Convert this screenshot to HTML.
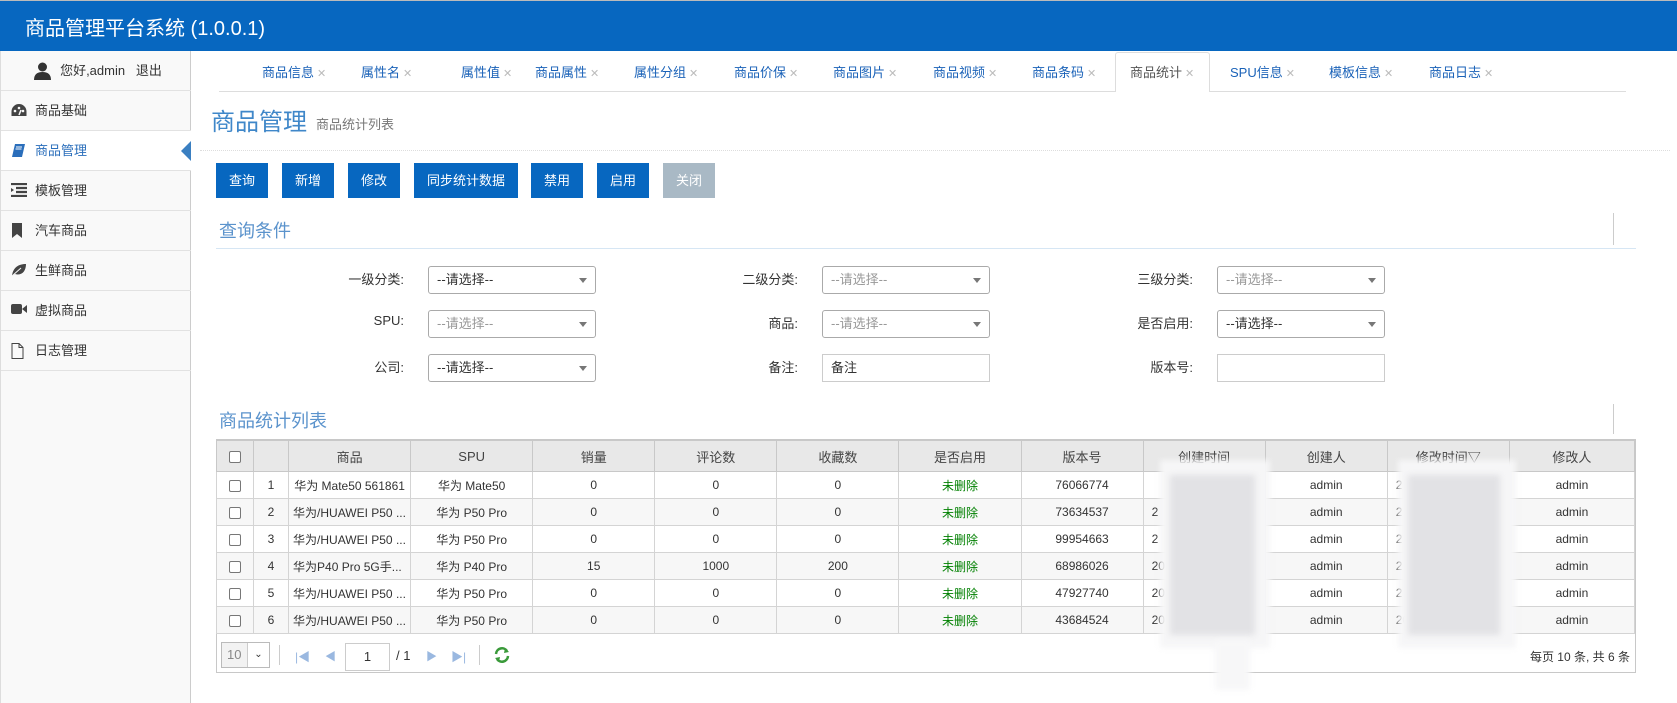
<!DOCTYPE html>
<html><head><meta charset="utf-8">
<style>
*{box-sizing:border-box;margin:0;padding:0}
body{width:1677px;height:703px;overflow:hidden;background:#fff;font-family:"Liberation Sans","Noto Sans CJK SC",sans-serif;font-size:13px;color:#333;position:relative}
.abs{position:absolute}
#hd{left:0;top:0;width:1677px;height:51px;background:#0767c0;border-top:1px solid #bbb}
#hd span{position:absolute;left:25px;top:11px;color:#fff;font-size:20px}
#sb{left:0;top:51px;width:191px;height:652px;background:#f9f9f9;border-right:1px solid #ccc;border-left:1px solid #ddd}
.it{position:absolute;left:0;width:190px;height:40px;border-bottom:1px solid #e2e2e2;line-height:39px;padding-left:34px;font-size:13px;color:#333}
.it svg{position:absolute;left:10px;top:12px}
.tab{position:absolute;top:62px;font-size:13px;color:#1a62b8;white-space:nowrap}
.tab i{font-style:normal;color:#bbb;font-size:11px;margin-left:3px}
.btn{position:absolute;top:163px;height:35px;line-height:35px;background:#0767c0;color:#fff;text-align:center;font-size:13px}
.lbl{position:absolute;text-align:right;width:120px;font-size:13px;color:#333}
.sel{position:absolute;width:168px;height:28px;border:1px solid #aaa;border-radius:3px;font-size:13px;line-height:26px;padding-left:8px;color:#333}
.sel.g{color:#999}
.sel:after{content:"";position:absolute;right:8px;top:11px;border-left:4px solid transparent;border-right:4px solid transparent;border-top:5px solid #777}
.sel.n:after{display:none}
table{position:absolute;left:216px;top:440px;width:1419px;border-collapse:collapse;table-layout:fixed;font-size:12px}
td,th{border:1px solid #d4d4d4;text-align:center;height:27px;white-space:nowrap;overflow:hidden;font-weight:normal}
th{background:#e8e8e8;height:31px;color:#444;font-size:13px;border-color:#c8c8c8}
tr:nth-child(odd) td{background:#f7f7f7}
.cb{display:inline-block;width:12px;height:12px;border:1px solid #777;border-radius:2px;background:#fff;vertical-align:middle}
.gr{color:#008000}
.bl{position:absolute;filter:blur(3px)}
</style></head><body>
<div id="hd" class="abs"><span>商品管理平台系统 (1.0.0.1)</span></div>

<div id="sb" class="abs">
 <div class="it" style="top:0;padding-left:0;text-align:center;line-height:40px">
  <svg style="position:absolute;left:33px;top:11px" width="17" height="18" viewBox="0 0 17 18"><circle cx="8.5" cy="5" r="4.5" fill="#333"/><path d="M0 18 Q0 10 8.5 10 Q17 10 17 18Z" fill="#333"/></svg>
  <span style="margin-left:30px">您好,admin&nbsp;&nbsp; 退出</span></div>
 <div class="it" style="top:40px"><svg width="16" height="14" viewBox="0 0 16 14"><path d="M8 1A7.5 7.5 0 0 0 .5 8.5V13h15V8.5A7.5 7.5 0 0 0 8 1z" fill="#444"/><circle cx="4" cy="8" r="1.3" fill="#f9f9f9"/><circle cx="8" cy="5" r="1.3" fill="#f9f9f9"/><circle cx="12" cy="8" r="1.3" fill="#f9f9f9"/><path d="M8 12L10 7" stroke="#f9f9f9" stroke-width="1.5"/></svg>商品基础</div>
 <div class="it" style="top:80px;background:#fff;color:#2a6ebb"><svg width="15" height="15" viewBox="0 0 15 15"><path d="M4 1h10l-3 13H1z" fill="#2a6ebb"/><path d="M5 4h6M4.5 6h6" stroke="#fff"/></svg>商品管理
  <div style="position:absolute;right:0;top:10px;border-top:10px solid transparent;border-bottom:10px solid transparent;border-right:10px solid #3a7fc1"></div></div>
 <div class="it" style="top:120px"><svg width="16" height="14" viewBox="0 0 16 14"><path d="M0 1h16M5 5h11M5 9h11M0 13h16" stroke="#444" stroke-width="2.2"/><path d="M0 5l3 2-3 2z" fill="#444"/></svg>模板管理</div>
 <div class="it" style="top:160px"><svg width="12" height="15" viewBox="0 0 12 15"><path d="M1 0h10v15l-5-4-5 4z" fill="#444"/></svg>汽车商品</div>
 <div class="it" style="top:200px"><svg width="16" height="14" viewBox="0 0 16 14"><path d="M1 13C2 4 8 1 15 1c0 7-4 12-11 10" fill="#444"/><path d="M1 13L10 5" stroke="#f9f9f9"/></svg>生鲜商品</div>
 <div class="it" style="top:240px"><svg width="16" height="12" viewBox="0 0 16 12"><rect x="0" y="1" width="11" height="10" rx="2" fill="#444"/><path d="M11 6l5-4v8z" fill="#444"/></svg>虚拟商品</div>
 <div class="it" style="top:280px"><svg width="13" height="16" viewBox="0 0 13 16"><path d="M1 .5h7l4 4v11H1z M8 .5v4h4" fill="none" stroke="#444"/></svg>日志管理</div>
</div>

<div class="abs" style="left:219px;top:91px;width:1407px;height:1px;background:#ddd"></div>
<div class="abs" style="left:1115px;top:52px;width:95px;height:40px;background:#fff;border:1px solid #ddd;border-bottom:none;border-radius:3px 3px 0 0"></div>
<div class="tab" style="left:262px">商品信息<i>✕</i></div>
<div class="tab" style="left:361px">属性名<i>✕</i></div>
<div class="tab" style="left:461px">属性值<i>✕</i></div>
<div class="tab" style="left:535px">商品属性<i>✕</i></div>
<div class="tab" style="left:634px">属性分组<i>✕</i></div>
<div class="tab" style="left:734px">商品价保<i>✕</i></div>
<div class="tab" style="left:833px">商品图片<i>✕</i></div>
<div class="tab" style="left:933px">商品视频<i>✕</i></div>
<div class="tab" style="left:1032px">商品条码<i>✕</i></div>
<div class="tab" style="left:1130px;color:#555">商品统计<i>✕</i></div>
<div class="tab" style="left:1230px">SPU信息<i>✕</i></div>
<div class="tab" style="left:1329px">模板信息<i>✕</i></div>
<div class="tab" style="left:1429px">商品日志<i>✕</i></div>

<div class="abs" style="left:211px;top:102px;font-size:24px;color:#3f87c9">商品管理</div>
<div class="abs" style="left:316px;top:114px;font-size:13px;color:#777">商品统计列表</div>
<div class="abs" style="left:200px;top:150px;width:1470px;border-top:1px dotted #ddd"></div>

<div class="btn" style="left:216px;width:52px">查询</div>
<div class="btn" style="left:282px;width:52px">新增</div>
<div class="btn" style="left:348px;width:52px">修改</div>
<div class="btn" style="left:414px;width:104px">同步统计数据</div>
<div class="btn" style="left:531px;width:52px">禁用</div>
<div class="btn" style="left:597px;width:52px">启用</div>
<div class="btn" style="left:663px;width:52px;background:#a9b9c5">关闭</div>

<div class="abs" style="left:219px;top:217px;font-size:18px;color:#5b93cc">查询条件</div>
<div class="abs" style="left:216px;top:248px;width:1420px;height:1px;background:#d6e6f4"></div>
<div class="abs" style="left:1613px;top:213px;width:1px;height:32px;background:#ccc"></div>

<div class="lbl" style="left:284px;top:269px">一级分类:</div>
<div class="sel" style="left:428px;top:266px">--请选择--</div>
<div class="lbl" style="left:678px;top:269px">二级分类:</div>
<div class="sel g" style="left:822px;top:266px">--请选择--</div>
<div class="lbl" style="left:1073px;top:269px">三级分类:</div>
<div class="sel g" style="left:1217px;top:266px">--请选择--</div>

<div class="lbl" style="left:284px;top:313px">SPU:</div>
<div class="sel g" style="left:428px;top:310px">--请选择--</div>
<div class="lbl" style="left:678px;top:313px">商品:</div>
<div class="sel g" style="left:822px;top:310px">--请选择--</div>
<div class="lbl" style="left:1073px;top:313px">是否启用:</div>
<div class="sel" style="left:1217px;top:310px">--请选择--</div>

<div class="lbl" style="left:284px;top:357px">公司:</div>
<div class="sel" style="left:428px;top:354px">--请选择--</div>
<div class="lbl" style="left:678px;top:357px">备注:</div>
<div class="sel n" style="left:822px;top:354px;border-color:#ccc;border-radius:0">备注</div>
<div class="lbl" style="left:1073px;top:357px">版本号:</div>
<div class="sel n" style="left:1217px;top:354px;border-color:#ccc;border-radius:0"></div>

<div class="abs" style="left:219px;top:407px;font-size:18px;color:#5b93cc">商品统计列表</div>
<div class="abs" style="left:1613px;top:404px;width:1px;height:30px;background:#ccc"></div>

<div class="abs" style="left:216px;top:439px;width:1420px;height:234px;border:1px solid #c8c8c8"></div>
<table>
<colgroup><col style="width:37px"><col style="width:35px"><col style="width:122px"><col style="width:122px"><col style="width:122px"><col style="width:122px"><col style="width:122px"><col style="width:122px"><col style="width:122px"><col style="width:122px"><col style="width:122px"><col style="width:122px"><col style="width:125px"></colgroup>
<tr><th><span class="cb"></span></th><th></th><th>商品</th><th>SPU</th><th>销量</th><th>评论数</th><th>收藏数</th><th>是否启用</th><th>版本号</th><th>创建时间</th><th>创建人</th><th>修改时间▽</th><th>修改人</th></tr>
<tr><td><span class="cb"></span></td><td>1</td><td>华为 Mate50 561861</td><td>华为 Mate50</td><td>0</td><td>0</td><td>0</td><td class="gr">未删除</td><td>76066774</td><td></td><td>admin</td><td style="text-align:left;padding-left:8px">2</td><td>admin</td></tr>
<tr><td><span class="cb"></span></td><td>2</td><td style="text-align:left;padding-left:4px">华为/HUAWEI P50 ...</td><td>华为 P50 Pro</td><td>0</td><td>0</td><td>0</td><td class="gr">未删除</td><td>73634537</td><td style="text-align:left;padding-left:8px">2</td><td>admin</td><td style="text-align:left;padding-left:8px">2</td><td>admin</td></tr>
<tr><td><span class="cb"></span></td><td>3</td><td style="text-align:left;padding-left:4px">华为/HUAWEI P50 ...</td><td>华为 P50 Pro</td><td>0</td><td>0</td><td>0</td><td class="gr">未删除</td><td>99954663</td><td style="text-align:left;padding-left:8px">2</td><td>admin</td><td style="text-align:left;padding-left:8px">2</td><td>admin</td></tr>
<tr><td><span class="cb"></span></td><td>4</td><td style="text-align:left;padding-left:4px">华为P40 Pro 5G手...</td><td>华为 P40 Pro</td><td>15</td><td>1000</td><td>200</td><td class="gr">未删除</td><td>68986026</td><td style="text-align:left;padding-left:8px">20</td><td>admin</td><td style="text-align:left;padding-left:8px">2</td><td>admin</td></tr>
<tr><td><span class="cb"></span></td><td>5</td><td style="text-align:left;padding-left:4px">华为/HUAWEI P50 ...</td><td>华为 P50 Pro</td><td>0</td><td>0</td><td>0</td><td class="gr">未删除</td><td>47927740</td><td style="text-align:left;padding-left:8px">20</td><td>admin</td><td style="text-align:left;padding-left:8px">2</td><td>admin</td></tr>
<tr><td><span class="cb"></span></td><td>6</td><td style="text-align:left;padding-left:4px">华为/HUAWEI P50 ...</td><td>华为 P50 Pro</td><td>0</td><td>0</td><td>0</td><td class="gr">未删除</td><td>43684524</td><td style="text-align:left;padding-left:8px">20</td><td>admin</td><td style="text-align:left;padding-left:8px">20</td><td>admin</td></tr>
</table>

<div class="bl" style="left:1160px;top:460px;width:110px;height:188px;background:#f6f6f7"></div>
<div class="bl" style="left:1170px;top:475px;width:85px;height:160px;background:#e2e2e5"></div>
<div class="bl" style="left:1215px;top:640px;width:35px;height:50px;background:#f7f7f8"></div>
<div class="bl" style="left:1398px;top:460px;width:118px;height:188px;background:#f6f6f7"></div>
<div class="bl" style="left:1408px;top:475px;width:92px;height:160px;background:#e2e2e5"></div>

<div class="abs" style="left:221px;top:642px;width:49px;height:26px;border:1px solid #bbb;font-size:13px;color:#888;line-height:24px;padding-left:5px;background:#f2f2f2">10<span style="position:absolute;right:0;top:0;width:22px;height:24px;background:#fff;border-left:1px solid #ccc;text-align:center;color:#333;font-size:10px">⌄</span></div>
<div class="abs" style="left:279px;top:645px;width:1px;height:20px;background:#ccc"></div>
<div class="abs" style="left:295px;top:648px;color:#9ab8e0;font-size:12px">|◀</div>
<div class="abs" style="left:325px;top:648px;color:#9ab8e0;font-size:11px">◀</div>
<div class="abs" style="left:345px;top:643px;width:45px;height:28px;border:1px solid #ccc;text-align:center;line-height:26px">1</div>
<div class="abs" style="left:396px;top:648px">/ 1</div>
<div class="abs" style="left:426px;top:648px;color:#9ab8e0;font-size:11px">▶</div>
<div class="abs" style="left:451px;top:648px;color:#9ab8e0;font-size:12px">▶|</div>
<div class="abs" style="left:479px;top:645px;width:1px;height:20px;background:#ccc"></div>
<svg class="abs" style="left:494px;top:647px" width="16" height="16" viewBox="0 0 16 16"><path d="M2 7A6 6 0 0 1 13 4" fill="none" stroke="#3a9a3a" stroke-width="2.5"/><path d="M11 1l4 4-5 1z" fill="#3a9a3a"/><path d="M14 9A6 6 0 0 1 3 12" fill="none" stroke="#3a9a3a" stroke-width="2.5"/><path d="M5 15l-4-4 5-1z" fill="#3a9a3a"/></svg>
<div class="abs" style="left:1490px;top:648px;width:140px;text-align:right;font-size:12px">每页 10 条, 共 6 条</div>
</body></html>
